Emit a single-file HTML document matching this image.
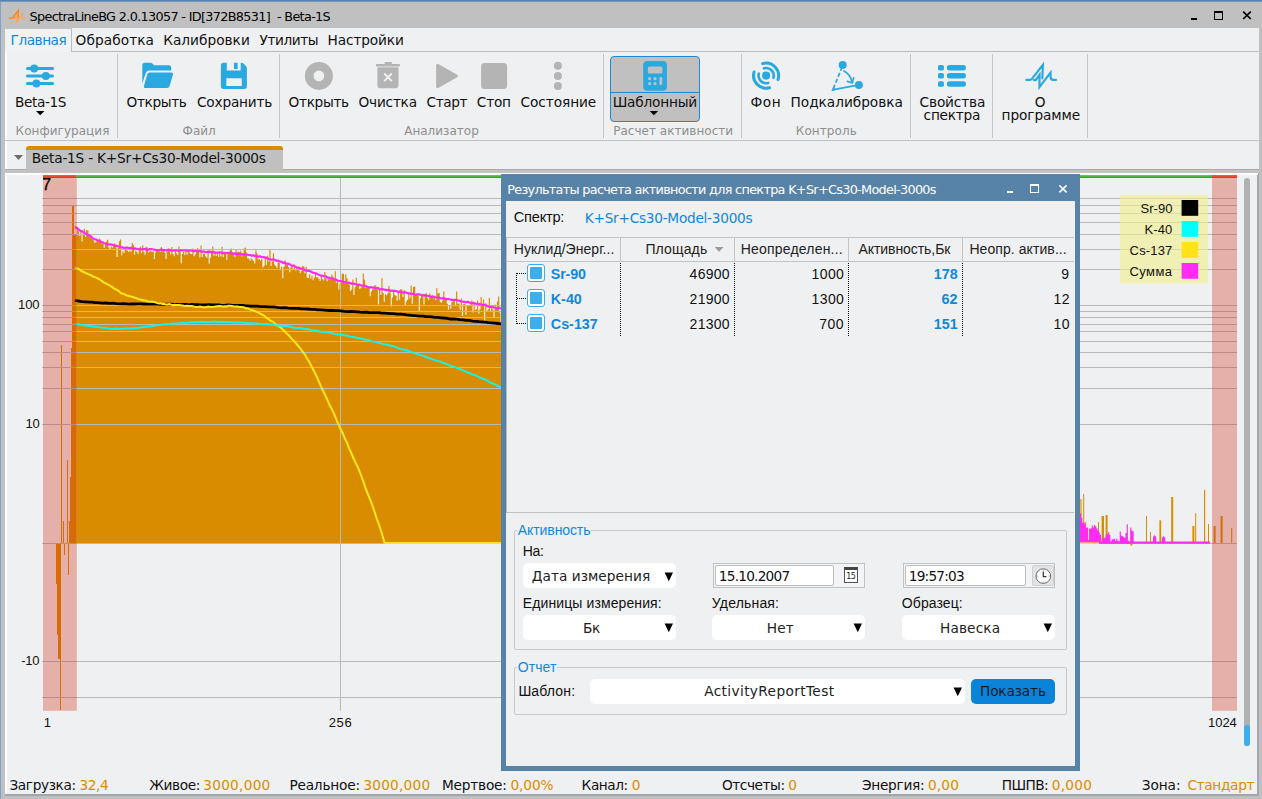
<!DOCTYPE html>
<html lang="ru"><head><meta charset="utf-8"><title>SpectraLineBG</title>
<style>
html,body{margin:0;padding:0}
body{width:1262px;height:799px;overflow:hidden;background:#c0c0c0;position:relative}
.b{position:absolute;display:block}
.t{position:absolute;line-height:20px;white-space:nowrap}
.dj{font-family:"DejaVu Sans",sans-serif}
.lb{font-family:"Liberation Sans",sans-serif}
</style></head>
<body>
<div class="b" style="left:0px;top:0px;width:1262px;height:2px;background:linear-gradient(#4a78a4,#7da1c4)"></div>
<div class="b" style="left:0px;top:2px;width:1px;height:797px;background:#7fa2c6"></div>
<div class="b" style="left:5px;top:28px;width:1254px;height:767px;background:#eff0f1"></div>
<div class="b" style="left:5px;top:52px;width:2px;height:743px;background:#fcfcfc"></div>
<div class="b" style="left:1257px;top:173px;width:2px;height:622px;background:#a3a7ac"></div>
<div class="b" style="left:5px;top:794px;width:1254px;height:1.5px;background:#a3a7ac"></div>
<span id="t1" class="t dj" style="left:29.6px;top:7.3px;font-size:12.8px;color:#000;letter-spacing:-0.664px;white-space:pre;">SpectraLineBG 2.0.13057 - ID[372B8531]&nbsp; - Beta-1S</span>
<div class="b" style="left:1191px;top:18px;width:6px;height:2px;background:#000"></div>
<div class="b" style="left:1214px;top:11px;width:9px;height:9px;border:1.5px solid #000;border-top-width:2.6px;box-sizing:border-box"></div>
<svg class="b" style="left:1242px;top:10px" width="10" height="10" viewBox="0 0 10 10"><path d="M1.2,1.6L8.8,9M8.8,1.6L1.2,9" stroke="#000" stroke-width="1.7" fill="none"/></svg>
<div class="b" style="left:5px;top:51px;width:1254px;height:1px;background:#bcbcbc"></div>
<div class="b" style="left:5px;top:28px;width:66px;height:24px;background:#f1f2f3;border-right:1px solid #bcbcbc;border-top:1px solid #c0c0c0;box-sizing:content-box;height:23px"></div>
<span id="t2" class="t dj" style="left:10.6px;top:29.7px;font-size:13.7px;color:#1287db;letter-spacing:-0.504px;">Главная</span>
<span id="t3" class="t dj" style="left:75.6px;top:29.7px;font-size:13.7px;color:#111;letter-spacing:0.072px;">Обработка</span>
<span id="t4" class="t dj" style="left:163.2px;top:29.7px;font-size:13.7px;color:#111;letter-spacing:0.012px;">Калибровки</span>
<span id="t5" class="t dj" style="left:259.6px;top:29.7px;font-size:13.7px;color:#111;letter-spacing:-0.434px;">Утилиты</span>
<span id="t6" class="t dj" style="left:327.6px;top:29.7px;font-size:13.7px;color:#111;letter-spacing:-0.123px;">Настройки</span>
<div class="b" style="left:5px;top:140px;width:1254px;height:1px;background:#c2c2c2"></div>
<div class="b" style="left:117px;top:54px;width:1px;height:84px;background:#c6c6c6"></div>
<div class="b" style="left:279px;top:54px;width:1px;height:84px;background:#c6c6c6"></div>
<div class="b" style="left:603px;top:54px;width:1px;height:84px;background:#c6c6c6"></div>
<div class="b" style="left:741px;top:54px;width:1px;height:84px;background:#c6c6c6"></div>
<div class="b" style="left:910px;top:54px;width:1px;height:84px;background:#c6c6c6"></div>
<div class="b" style="left:992px;top:54px;width:1px;height:84px;background:#c6c6c6"></div>
<div class="b" style="left:1087px;top:54px;width:1px;height:84px;background:#c6c6c6"></div>
<span id="t7" class="t dj" style="left:15.6px;top:120.6px;font-size:12px;color:#8e8e8e;letter-spacing:0.039px;">Конфигурация</span>
<span id="t8" class="t dj" style="left:182.6px;top:120.6px;font-size:12px;color:#8e8e8e;letter-spacing:0.009px;">Файл</span>
<span id="t9" class="t dj" style="left:404.2px;top:120.6px;font-size:12px;color:#8e8e8e;letter-spacing:0.004px;">Анализатор</span>
<span id="t10" class="t dj" style="left:613.2px;top:120.6px;font-size:12px;color:#8e8e8e;letter-spacing:0.029px;">Расчет активности</span>
<span id="t11" class="t dj" style="left:795.8px;top:120.6px;font-size:12px;color:#8e8e8e;letter-spacing:0.074px;">Контроль</span>
<div class="b" style="left:610px;top:56px;width:90px;height:66px;background:#c0c0c0;border:1px solid #1e8ad6;border-radius:4px;box-sizing:border-box"></div>
<div class="b" style="left:611px;top:92px;width:88px;height:1px;background:#1e8ad6"></div>
<span id="t12" class="t dj" style="left:14.9px;top:91.9px;font-size:13.7px;color:#111;letter-spacing:-0.387px;">Beta-1S</span>
<span id="t13" class="t dj" style="left:126.6px;top:91.9px;font-size:13.7px;color:#111;letter-spacing:-0.395px;">Открыть</span>
<span id="t14" class="t dj" style="left:197.0px;top:91.9px;font-size:13.7px;color:#111;letter-spacing:-0.211px;">Сохранить</span>
<span id="t15" class="t dj" style="left:288.6px;top:91.9px;font-size:13.7px;color:#111;letter-spacing:-0.337px;">Открыть</span>
<span id="t16" class="t dj" style="left:358.6px;top:91.9px;font-size:13.7px;color:#111;letter-spacing:-0.246px;">Очистка</span>
<span id="t17" class="t dj" style="left:426.6px;top:91.9px;font-size:13.7px;color:#111;letter-spacing:-0.397px;">Старт</span>
<span id="t18" class="t dj" style="left:476.8px;top:91.9px;font-size:13.7px;color:#111;letter-spacing:-0.215px;">Стоп</span>
<span id="t19" class="t dj" style="left:520.6px;top:91.9px;font-size:13.7px;color:#111;letter-spacing:-0.079px;">Состояние</span>
<span id="t20" class="t dj" style="left:612.7px;top:91.9px;font-size:13.7px;color:#111;letter-spacing:-0.211px;">Шаблонный</span>
<span id="t21" class="t dj" style="left:750.6px;top:91.9px;font-size:13.7px;color:#111;letter-spacing:0.496px;">Фон</span>
<span id="t22" class="t dj" style="left:790.6px;top:91.9px;font-size:13.7px;color:#111;letter-spacing:-0.035px;">Подкалибровка</span>
<span id="t23" class="t dj" style="left:919.6px;top:91.9px;font-size:13.7px;color:#111;letter-spacing:-0.157px;">Свойства</span>
<span id="t24" class="t dj" style="left:923.6px;top:104.9px;font-size:13.7px;color:#111;letter-spacing:-0.231px;">спектра</span>
<span id="t25" class="t dj" style="left:1034.8px;top:91.9px;font-size:13.7px;color:#111;letter-spacing:-0.184px;">О</span>
<span id="t26" class="t dj" style="left:1001.6px;top:104.9px;font-size:13.7px;color:#111;letter-spacing:-0.084px;">программе</span>
<svg class="b" style="left:8.5px;top:7.5px" width="17" height="16.5" viewBox="1025 61 32.5 30"><g fill="none" stroke-width="2.7" stroke-linejoin="miter" stroke-linecap="round" stroke-miterlimit="10"><path stroke="#ff8412" d="M1026.4,79.9H1029.8Q1031.1,79.9 1031.9,78.9L1042.9,64.9L1042.3,78.4"/><path stroke="#ffa454" d="M1033.9,80.1H1035.6L1039.5,74.7L1039.5,87.1L1050.5,72.6L1050.6,77.1Q1050.6,79.9 1053.2,79.9H1056"/></g></svg>
<svg class="b" style="left:0;top:0" width="1262" height="150" viewBox="0 0 1262 150"><g stroke="#2aa8e0" stroke-width="3" stroke-linecap="round"><path d="M27.5,68.4H52.5M27.5,76H52.5M27.5,83.5H52.5"/></g><g fill="#2aa8e0"><circle cx="34.2" cy="68.4" r="4"/><circle cx="45.8" cy="76" r="4"/><circle cx="36.4" cy="83.5" r="4"/></g><path d="M36,111h8.4l-4.2,4.2z" fill="#000"/><path d="M649.7,111h8.4l-4.2,4.2z" fill="#000"/><path fill="#2aa8e0" d="M142.3,65.2Q142.3,62.7 144.8,62.7H150.5Q151.6,62.7 152.4,63.5L153.6,64.7Q154.2,65.2 155,65.2H168.7Q171.2,65.2 171.2,67.7V70.6H149.2Q146.6,70.6 145.8,73L142.3,83.5Z"/><path fill="#2aa8e0" d="M149.6,72.4H171.2Q173.6,72.4 172.9,74.7L169.6,86.1Q169,88 167,88H145.6Q143.2,88 144,85.7L147.3,74.2Q147.8,72.4 149.6,72.4Z"/><path fill="#2aa8e0" fill-rule="evenodd" d="M223.6,62.7H241.5Q242.6,62.7 243.4,63.5L246.1,66.2Q246.9,67 246.9,68.1V86.3Q246.9,89 244.2,89H223.6Q220.9,89 220.9,86.3V65.4Q220.9,62.7 223.6,62.7ZM226.8,62.7V70.5H240.7V62.7H237.6V69H234V62.7ZM226.3,78.2H241.8V85.9H226.3Z"/><path fill="#b4b4b4" fill-rule="evenodd" d="M304.9,75.9a14,14 0 1,0 28,0a14,14 0 1,0 -28,0ZM313.5,75.9a5.4,5.4 0 1,0 10.8,0a5.4,5.4 0 1,0 -10.8,0Z"/><path fill="#b4b4b4" d="M385.4,62h5.6q.8,0 .8,.8V64H399q1,0 1,1v.4q0,1 -1,1H376.9q-1,0 -1,-1V65q0,-1 1,-1h7.7V62.8q0,-.8 .8,-.8Z"/><path fill="#b4b4b4" d="M377.4,67.2H398.5V85.2Q398.5,88.2 395.5,88.2H380.4Q377.4,88.2 377.4,85.2Z"/><path stroke="#eff0f1" stroke-width="2" fill="none" d="M384.2,73.5L391.8,81.1M391.8,73.5L384.2,81.1"/><path fill="#b4b4b4" stroke="#b4b4b4" stroke-width="3" stroke-linejoin="round" d="M437.6,65.2L456.4,76L437.6,86.8Z"/><rect x="481.1" y="63.1" width="26" height="26" rx="3.6" fill="#b4b4b4"/><g fill="#b4b4b4"><circle cx="557.9" cy="65.7" r="4"/><circle cx="557.9" cy="76" r="4"/><circle cx="557.9" cy="86.1" r="4"/></g><rect x="643.2" y="61" width="23.7" height="29.7" rx="4" fill="#2aa8e0"/><rect x="647.8" y="66.4" width="14.6" height="7.1" rx="1.6" fill="#c0c0c0"/><g fill="#c0c0c0"><circle cx="649.6" cy="78.7" r="1.6"/><circle cx="655" cy="78.7" r="1.6"/><circle cx="649.6" cy="83.7" r="1.6"/><circle cx="655" cy="83.7" r="1.6"/><rect x="659.4" y="77" width="2.9" height="8.2" rx="1.4"/></g><circle cx="766.1" cy="75.6" r="4.1" fill="#2aa8e0"/><g fill="none" stroke="#2aa8e0" stroke-width="3" stroke-linecap="round"><path d="M762.6,63.6A12.6,12.6 0 0 1 778,79.6"/><path d="M769.6,87.7A12.6,12.6 0 0 1 754.1,72"/></g><g fill="none" stroke="#2aa8e0" stroke-width="2.6" stroke-linecap="round"><path d="M764,68.3A7.6,7.6 0 0 1 773.4,77.8"/><path d="M768.2,82.9A7.6,7.6 0 0 1 758.8,73.6"/></g><g fill="#2aa8e0"><circle cx="842.7" cy="65.1" r="4"/><circle cx="858.9" cy="84.9" r="4"/></g><g fill="none" stroke="#2aa8e0" stroke-width="1.7"><path d="M842.2,67L832.9,89.6" stroke-dasharray="4.2,2.2"/><path d="M832.2,89.8L858.9,84.9"/><path d="M844,71Q850,74 852,82M847.4,81.4L852.2,83L853.7,77.8" stroke-linecap="round"/></g><path fill="#2aa8e0" d="M831.3,91L833.5,86.6L835.6,90.1Z"/><rect x="938" y="65" width="5.9" height="5.6" rx="1.6" fill="#2aa8e0"/><rect x="946.8" y="65.1" width="19.2" height="5.4" rx="2.7" fill="#2aa8e0"/><rect x="938" y="73" width="5.9" height="5.6" rx="1.6" fill="#2aa8e0"/><rect x="946.8" y="73.1" width="19.2" height="5.4" rx="2.7" fill="#2aa8e0"/><rect x="938" y="81.2" width="5.9" height="5.6" rx="1.6" fill="#2aa8e0"/><rect x="946.8" y="81.3" width="19.2" height="5.4" rx="2.7" fill="#2aa8e0"/><g fill="none" stroke="#2aa8e0" stroke-width="2.2" stroke-linecap="round" stroke-linejoin="miter" stroke-miterlimit="10"><path d="M1026.4,79.9H1029.8Q1031.1,79.9 1031.9,78.9L1042.9,64.9L1042.3,78.4"/><path d="M1033.9,80.1H1035.6L1039.5,74.7L1039.5,87.1L1050.5,72.6L1050.6,77.1Q1050.6,79.9 1053.2,79.9H1056"/></g></svg>
<div class="b" style="left:5px;top:169px;width:1254px;height:1px;background:#a9a9a9"></div>
<div class="b" style="left:5px;top:170px;width:1254px;height:3px;background:#c3c3c3"></div>
<div class="b" style="left:26px;top:146px;width:257px;height:26px;background:#c0c0c0;border-top:4px solid #d98c00;border-radius:3px 3px 0 0;box-sizing:border-box"></div>
<svg class="b" style="left:13px;top:154px" width="12" height="8" viewBox="0 0 12 8"><path d="M1,1h9l-4.5,5z" fill="#6e6e6e"/></svg>
<span id="t27" class="t dj" style="left:31.7px;top:147.7px;font-size:13.7px;color:#111;letter-spacing:-0.217px;">Beta-1S - K+Sr+Cs30-Model-3000s</span>
<div class="b" style="left:5px;top:173px;width:1253px;height:2px;background:#fff"></div>
<svg class="b" style="left:0;top:170px" width="1262" height="545" viewBox="0 170 1262 545"><path d="M76.8,543V228.3h1.167V231.2h1.167V235.7h1.167V230.7h1.167V241.5h1.167V233.5h1.167V228.7h1.167V236.7h1.167V229.9h1.167V230.4h1.167V237.1h1.167V236.8h1.167V238.5h1.167V239.4h1.167V240.6h1.167V243.1h1.167V241.9h1.167V240.4h1.167V239.9h1.167V238.8h1.167V239.7h1.167V243.5h1.167V243.3h1.167V247.7h1.167V243.5h1.167V241.6h1.167V239.8h1.167V247.5h1.167V249.8h1.167V246.6h1.167V247.8h1.167V244.1h1.167V243.3h1.167V245.0h1.167V257.0h1.167V248.1h1.167V241.3h1.167V239.4h1.167V255.5h1.167V251.3h1.167V253.0h1.167V249.8h1.167V250.2h1.167V250.5h1.167V251.9h1.167V250.7h1.167V251.8h1.167V243.1h1.167V244.8h1.167V254.7h1.167V250.5h1.167V251.7h1.167V253.9h1.167V248.3h1.167V246.8h1.167V253.0h1.167V245.3h1.167V252.0h1.167V254.8h1.167V246.7h1.167V247.5h1.167V252.3h1.167V251.4h1.167V250.8h1.167V252.0h1.167V251.3h1.167V259.1h1.167V252.4h1.167V249.0h1.167V249.3h1.167V249.4h1.167V251.9h1.167V246.9h1.167V251.5h1.167V249.3h1.167V253.0h1.167V259.1h1.167V252.1h1.167V250.2h1.167V250.8h1.167V254.4h1.167V247.1h1.167V254.0h1.167V256.2h1.167V250.0h1.167V253.3h1.167V255.0h1.167V246.4h1.167V251.9h1.167V263.3h1.167V254.1h1.167V251.9h1.167V255.1h1.167V250.5h1.167V254.7h1.167V250.7h1.167V252.4h1.167V253.9h1.167V253.9h1.167V248.5h1.167V256.2h1.167V254.5h1.167V252.0h1.167V248.1h1.167V249.0h1.167V257.5h1.167V245.4h1.167V257.1h1.167V253.7h1.167V253.8h1.167V256.4h1.167V257.7h1.167V250.1h1.167V263.4h1.167V257.7h1.167V251.9h1.167V246.5h1.167V255.8h1.167V253.0h1.167V256.0h1.167V253.0h1.167V256.9h1.167V251.0h1.167V256.5h1.167V246.7h1.167V257.3h1.167V253.0h1.167V253.7h1.167V260.1h1.167V254.1h1.167V253.4h1.167V249.7h1.167V248.5h1.167V252.2h1.167V254.4h1.167V257.3h1.167V249.1h1.167V252.4h1.167V251.6h1.167V252.2h1.167V250.8h1.167V256.4h1.167V252.9h1.167V248.4h1.167V247.5h1.167V252.4h1.167V258.4h1.167V258.4h1.167V260.7h1.167V258.4h1.167V259.4h1.167V261.0h1.167V263.5h1.167V250.4h1.167V253.5h1.167V259.5h1.167V259.3h1.167V260.7h1.167V258.8h1.167V267.5h1.167V265.7h1.167V257.1h1.167V265.0h1.167V255.8h1.167V261.5h1.167V249.9h1.167V266.0h1.167V261.6h1.167V253.2h1.167V264.5h1.167V265.9h1.167V268.1h1.167V262.7h1.167V262.7h1.167V270.3h1.167V266.6h1.167V278.2h1.167V267.1h1.167V260.4h1.167V265.1h1.167V264.3h1.167V266.9h1.167V272.2h1.167V267.2h1.167V264.9h1.167V269.7h1.167V264.5h1.167V270.4h1.167V267.8h1.167V268.9h1.167V270.3h1.167V273.3h1.167V271.2h1.167V265.9h1.167V266.4h1.167V273.6h1.167V266.7h1.167V277.8h1.167V278.1h1.167V274.3h1.167V278.7h1.167V275.8h1.167V280.2h1.167V277.7h1.167V273.4h1.167V277.5h1.167V277.3h1.167V279.1h1.167V280.9h1.167V275.0h1.167V279.0h1.167V280.5h1.167V272.0h1.167V278.3h1.167V281.2h1.167V278.3h1.167V279.4h1.167V279.1h1.167V274.5h1.167V276.8h1.167V277.9h1.167V271.2h1.167V283.1h1.167V280.6h1.167V289.4h1.167V283.8h1.167V280.9h1.167V273.8h1.167V273.7h1.167V282.4h1.167V274.5h1.167V278.3h1.167V283.6h1.167V284.8h1.167V290.9h1.167V289.6h1.167V279.5h1.167V295.1h1.167V287.2h1.167V277.7h1.167V284.4h1.167V284.1h1.167V289.1h1.167V287.7h1.167V285.5h1.167V273.6h1.167V279.6h1.167V287.9h1.167V286.0h1.167V285.9h1.167V287.4h1.167V296.2h1.167V291.5h1.167V289.6h1.167V286.6h1.167V285.0h1.167V286.5h1.167V289.5h1.167V304.4h1.167V287.9h1.167V295.1h1.167V278.2h1.167V293.0h1.167V301.7h1.167V294.2h1.167V295.3h1.167V293.4h1.167V285.7h1.167V292.5h1.167V306.6h1.167V297.4h1.167V291.9h1.167V294.9h1.167V295.7h1.167V300.7h1.167V292.6h1.167V299.8h1.167V289.3h1.167V289.6h1.167V296.9h1.167V290.0h1.167V305.6h1.167V301.5h1.167V299.7h1.167V294.1h1.167V298.2h1.167V285.5h1.167V303.7h1.167V287.0h1.167V286.6h1.167V294.8h1.167V293.6h1.167V295.5h1.167V310.8h1.167V298.2h1.167V294.7h1.167V293.6h1.167V304.4h1.167V294.0h1.167V293.0h1.167V298.3h1.167V299.7h1.167V293.4h1.167V297.4h1.167V294.7h1.167V298.5h1.167V296.6h1.167V299.9h1.167V288.2h1.167V293.6h1.167V292.9h1.167V302.0h1.167V302.8h1.167V300.6h1.167V291.6h1.167V299.1h1.167V298.9h1.167V303.7h1.167V309.8h1.167V306.0h1.167V308.4h1.167V302.0h1.167V300.4h1.167V300.6h1.167V305.7h1.167V291.5h1.167V303.6h1.167V303.4h1.167V309.7h1.167V298.6h1.167V316.1h1.167V304.0h1.167V303.7h1.167V314.8h1.167V305.6h1.167V306.0h1.167V304.7h1.167V304.7h1.167V300.6h1.167V312.4h1.167V302.0h1.167V310.1h1.167V309.2h1.167V300.4h1.167V313.4h1.167V309.3h1.167V296.9h1.167V305.7h1.167V299.4h1.167V321.3h1.167V303.2h1.167V311.6h1.167V309.5h1.167V298.0h1.167V312.1h1.167V306.5h1.167V309.4h1.167V317.5h1.167V304.4h1.167V308.4h1.167V301.4h1.167V296.5h1.167V312.6h1.167V324.4h1.167V314.9h1.167V311.8h1.167V307.6h1.167V293.9h1.167V315.7h1.167V325.7h1.167V307.7h1.167V305.9h1.167V311.3h1.167V311.7h1.167V314.4h1.167V310.9h1.167V305.0h1.167V320.8h1.167V318.8h1.167V314.6h1.167V314.7h1.167V327.7h1.167V303.7h1.167V328.5h1.167V315.7h1.167V314.2h1.167V313.7h1.167V301.1h1.167V322.5h1.167V312.3h1.167V318.6h1.167V319.5h1.167V322.7h1.167V324.5h1.167V316.3h1.167V322.8h1.167V312.4h1.167V319.3h1.167V320.0h1.167V314.9h1.167V321.6h1.167V307.3h1.167V314.7h1.167V322.9h1.167V321.1h1.167V333.1h1.167V325.9h1.167V320.0h1.167V332.6h1.167V306.0h1.167V325.1h1.167V323.4h1.167V320.0h1.167V326.2h1.167V319.6h1.167V307.5h1.167V323.2h1.167V315.9h1.167V320.4h1.167V316.6h1.167V328.9h1.167V332.5h1.167V305.3h1.167V334.3h1.167V325.5h1.167V313.3h1.167V310.4h1.167V324.6h1.167V328.3h1.167V324.5h1.167V332.1h1.167V322.1h1.167V328.7h1.167V318.6h1.167V327.3h1.167V323.4h1.167V326.0h1.167V331.3h1.167V324.9h1.167V334.6h1.167V331.7h1.167V326.3h1.167V324.4h1.167V330.6h1.167V329.5h1.167V328.1h1.167V325.1h1.167V325.0h1.167V322.8h1.167V330.8h1.167V324.6h1.167V336.6h1.167V343.7h1.167V311.0h1.167V330.5h1.167V324.5h1.167V317.9h1.167V335.7h1.167V338.4h1.167V331.2h1.167V320.6h1.167V318.6h1.167V325.1h1.167V337.3h1.167V315.3h1.167V329.5h1.167V338.3h1.167V314.5h1.167V347.7h1.167V347.4h1.167V339.4h1.167V330.0h1.167V335.4h1.167V329.9h1.167V322.3h1.167V342.3h1.167V336.0h1.167V342.1h1.167V339.0h1.167V339.2h1.167V344.8h1.167V344.2h1.167V338.1h1.167V333.2h1.167V332.1h1.167V332.3h1.167V327.3h1.167V342.4h1.167V348.1h1.167V339.5h1.167V339.4h1.167V325.3h1.167V335.2h1.167V339.7h1.167V346.3h1.167V352.6h1.167V337.8h1.167V337.7h1.167V337.9h1.167V340.5h1.167V345.0h1.167V340.0h1.167V339.9h1.167V327.5h1.167V322.4h1.167V343.4h1.167V355.3h1.167V325.1h1.167V343.4h1.167V338.8h1.167V345.6h1.167V340.0h1.167V346.0h1.167V350.8h1.167V350.0h1.167V346.5h1.167V338.2h1.167V330.2h1.167V353.7h1.167V353.1h1.167V354.0h1.167V339.5h1.167V362.5h1.167V362.8h1.167V349.8h1.167V342.0h1.167V339.4h1.167V359.8h1.167V349.0h1.167V346.7h1.167V334.1h1.167V331.3h1.167V352.8h1.167V351.1h1.167V344.1h1.167V345.1h1.167V355.7h1.167V364.8h1.167V360.2h1.167V352.5h1.167V354.6h1.167V364.4h1.167V346.3h1.167V346.7h1.167V354.1h1.167V359.3h1.167V365.2h1.167V343.7h1.167V368.0h1.167V356.4h1.167V349.9h1.167V348.5h1.167V359.8h1.167V372.0h1.167V368.7h1.167V361.1h1.167V369.2h1.167V359.0h1.167V362.3h1.167V370.7h1.167V361.3h1.167V354.1h1.167V374.9h1.167V365.9h1.167V375.6h1.167V361.4h1.167V360.5h1.167V351.1h1.167V362.0h1.167V364.7h1.167V356.2h1.167V345.5h1.167V353.5h1.167V360.0h1.167V362.5h1.167V377.9h1.167V365.7h1.167V363.7h1.167V364.3h1.167V342.1h1.167V372.3h1.167V360.3h1.167V356.3h1.167V355.9h1.167V348.7h1.167V371.3h1.167V353.3h1.167V374.6h1.167V372.1h1.167V382.8h1.167V370.9h1.167V371.7h1.167V376.6h1.167V383.8h1.167V365.8h1.167V357.7h1.167V384.3h1.167V377.6h1.167V387.6h1.167V353.0h1.167V388.4h1.167V360.7h1.167V376.1h1.167V376.1h1.167V361.6h1.167V360.3h1.167V379.4h1.167V378.7h1.167V386.1h1.167V386.9h1.167V373.5h1.167V392.6h1.167V390.3h1.167V375.3h1.167V389.7h1.167V381.2h1.167V369.5h1.167V393.9h1.167V383.3h1.167V376.8h1.167V388.5h1.167V381.4h1.167V394.8h1.167V382.5h1.167V387.8h1.167V395.1h1.167V381.5h1.167V399.0h1.167V380.0h1.167V371.7h1.167V400.2h1.167V395.3h1.167V378.2h1.167V378.3h1.167V390.5h1.167V393.5h1.167V390.0h1.167V396.8h1.167V370.3h1.167V403.9h1.167V369.4h1.167V385.6h1.167V383.7h1.167V399.2h1.167V380.3h1.167V374.1h1.167V394.0h1.167V376.0h1.167V399.3h1.167V386.9h1.167V386.4h1.167V370.7h1.167V394.4h1.167V405.9h1.167V391.2h1.167V402.8h1.167V411.2h1.167V411.6h1.167V412.1h1.167V395.0h1.167V403.9h1.167V413.4h1.167V396.0h1.167V401.3h1.167V394.2h1.167V385.4h1.167V411.8h1.167V415.0h1.167V413.3h1.167V394.1h1.167V393.8h1.167V407.4h1.167V406.4h1.167V382.8h1.167V394.7h1.167V392.9h1.167V416.9h1.167V414.0h1.167V398.8h1.167V398.9h1.167V396.6h1.167V397.5h1.167V416.4h1.167V423.7h1.167V424.2h1.167V411.9h1.167V423.3h1.167V425.6h1.167V426.1h1.167V422.7h1.167V391.1h1.167V410.8h1.167V382.6h1.167V428.6h1.167V394.2h1.167V429.6h1.167V411.8h1.167V419.5h1.167V431.1h1.167V417.8h1.167V409.8h1.167V427.1h1.167V433.2h1.167V411.5h1.167V410.7h1.167V426.3h1.167V428.2h1.167V399.8h1.167V427.2h1.167V436.8h1.167V434.4h1.167V395.9h1.167V415.2h1.167V421.2h1.167V431.8h1.167V414.4h1.167V440.5h1.167V430.6h1.167V424.0h1.167V439.2h1.167V406.0h1.167V438.4h1.167V443.8h1.167V414.7h1.167V444.9h1.167V413.5h1.167V434.6h1.167V429.1h1.167V424.5h1.167V421.4h1.167V436.0h1.167V448.7h1.167V449.2h1.167V416.8h1.167V411.0h1.167V416.1h1.167V444.4h1.167V403.3h1.167V408.1h1.167V432.2h1.167V425.0h1.167V434.2h1.167V433.2h1.167V440.5h1.167V418.9h1.167V442.5h1.167V457.1h1.167V444.0h1.167V424.5h1.167V412.0h1.167V451.6h1.167V442.9h1.167V460.6h1.167V450.7h1.167V419.7h1.167V462.3h1.167V451.9h1.167V445.2h1.167V427.9h1.167V464.7h1.167V415.9h1.167V445.1h1.167V428.4h1.167V464.1h1.167V462.4h1.167V434.6h1.167V398.9h1.167V452.1h1.167V446.1h1.167V470.9h1.167V471.5h1.167V429.0h1.167V472.8h1.167V440.4h1.167V473.0h1.167V460.1h1.167V439.1h1.167V428.4h1.167V438.5h1.167V441.3h1.167V456.5h1.167V449.5h1.167V465.2h1.167V480.3h1.167V473.6h1.167V416.1h1.167V482.4h1.167V431.2h1.167V460.8h1.167V484.6h1.167V485.3h1.167V427.6h1.167V483.3h1.167V475.3h1.167V488.3h1.167V461.1h1.167V427.1h1.167V444.4h1.167V466.6h1.167V482.8h1.167V486.1h1.167V481.9h1.167V494.4h1.167V495.2h1.167V484.0h1.167V484.9h1.167V485.3h1.167V467.7h1.167V473.2h1.167V438.6h1.167V459.4h1.167V458.9h1.167V485.5h1.167V503.1h1.167V503.9h1.167V492.7h1.167V475.7h1.167V506.2h1.167V483.4h1.167V493.4h1.167V459.9h1.167V507.9h1.167V472.5h1.167V511.2h1.167V465.0h1.167V512.9h1.167V513.8h1.167V491.3h1.167V487.3h1.167V458.0h1.167V517.3h1.167V496.6h1.167V458.5h1.167V520.0h1.167V464.6h1.167V476.0h1.167V522.7h1.167V508.6h1.167V524.5h1.167V464.0h1.167V526.1h1.167V466.9h1.167V527.7h1.167V478.1h1.167V508.2h1.167V523.0h1.167V527.6h1.167V531.2h1.167V488.2h1.167V494.6h1.167V516.6h1.167V533.5h1.167V534.1h1.167V534.6h1.167V474.8h1.167V495.8h1.167V489.2h1.167V526.2h1.167V537.2h1.167V537.7h1.167V499.0h1.167V538.0h1.167V543Z" fill="#d98c00"/><rect x="72" y="205.7" width="2" height="337.3" fill="#d98c00"/><rect x="74" y="235" width="2.8" height="308" fill="#d98c00"/><rect x="71" y="348" width="1" height="195" fill="#d98c00"/><rect x="70" y="477" width="1" height="66" fill="#d98c00"/><rect x="61" y="345" width="1" height="198" fill="#d98c00"/><rect x="63" y="521" width="1" height="22" fill="#d98c00"/><rect x="67" y="460" width="1" height="83" fill="#d98c00"/><rect x="69" y="521" width="1" height="22" fill="#d98c00"/><rect x="56" y="543" width="1" height="41" fill="#d98c00"/><rect x="57" y="543" width="1" height="91.5" fill="#d98c00"/><rect x="58" y="543" width="2" height="116" fill="#d98c00"/><rect x="60" y="543" width="1" height="167" fill="#d98c00"/><rect x="64" y="543" width="1" height="12" fill="#d98c00"/><rect x="68" y="543" width="1" height="32" fill="#d98c00"/><rect x="1083.2" y="494" width="1" height="49" fill="#d98c00"/><rect x="1085.2" y="522" width="1" height="21" fill="#d98c00"/><rect x="1089" y="528.6" width="1" height="14.4" fill="#d98c00"/><rect x="1098" y="522" width="1" height="21" fill="#d98c00"/><rect x="1101.6" y="516" width="2.4" height="27" fill="#d98c00"/><rect x="1105.6" y="515" width="2" height="28" fill="#d98c00"/><rect x="1146" y="516" width="1" height="27" fill="#d98c00"/><rect x="1150" y="532" width="1" height="11" fill="#d98c00"/><rect x="1159.4" y="520.3" width="1.8" height="22.7" fill="#d98c00"/><rect x="1171.2" y="497" width="2" height="46" fill="#d98c00"/><rect x="1192.4" y="526" width="2" height="17" fill="#d98c00"/><rect x="1195.2" y="513" width="1" height="30" fill="#d98c00"/><rect x="1204" y="490" width="1.2" height="53" fill="#d98c00"/><rect x="1208" y="524" width="1" height="19" fill="#d98c00"/><rect x="1213.6" y="526" width="2" height="17" fill="#d98c00"/><rect x="1220.6" y="516" width="2" height="27" fill="#d98c00"/><rect x="1231.2" y="528" width="1" height="15" fill="#d98c00"/><rect x="1130.4" y="543" width="2" height="2.6" fill="#d98c00"/><path d="M42,198.5H1237M42,205.5H1237M42,213.5H1237M42,222.5H1237M42,234.5H1237M42,249.5H1237M42,269.5H1237M42,305.5H1237M42,311.5H1237M42,317.5H1237M42,324.5H1237M42,331.5H1237M42,341.5H1237M42,352.5H1237M42,367.5H1237M42,388.5H1237M42,424.5H1237M42,543.5H1237M42,661.5H1237M42,697.5H1237" stroke="#b9b9b9" stroke-width="1" fill="none"/><path d="M340.5,178V711M638.5,178V711M936.5,178V711" stroke="#b9b9b9" stroke-width="1" fill="none"/><path d="M74.8,300.6L76.6,300.7L79.0,301.1L82.1,301.6L85.7,301.9L90.0,302.2L92.3,302.1L94.7,302.6L97.3,302.7L99.9,302.9L102.8,303.2L105.8,303.0L109.1,303.4L112.8,303.2L116.7,303.7L121.0,303.9L123.4,303.6L126.0,303.8L128.7,304.1L131.5,304.0L134.4,304.0L137.4,303.9L140.5,303.8L143.7,304.0L146.9,304.1L150.2,304.0L153.5,304.1L156.8,304.0L160.2,304.3L163.5,304.4L166.9,304.2L170.2,304.2L173.5,304.4L176.8,304.4L180.0,304.7L183.0,304.5L185.9,304.5L188.8,304.8L191.7,304.5L194.5,304.7L197.4,304.6L200.2,304.9L203.0,304.8L205.9,304.9L208.8,304.7L211.8,304.9L214.8,305.0L217.8,304.9L221.0,305.2L224.3,305.3L227.7,305.0L231.2,305.2L234.8,305.3L238.6,305.4L242.5,305.5L245.1,305.7L247.7,305.8L250.5,306.1L253.3,306.2L256.2,306.1L259.2,306.4L262.3,306.6L265.4,306.7L268.5,306.8L271.7,306.9L275.0,307.0L278.2,307.7L281.5,307.8L284.9,307.6L288.2,308.1L291.5,308.4L294.9,308.4L298.2,308.4L301.6,308.8L304.9,308.9L308.1,309.0L311.4,309.4L314.6,309.3L317.8,309.9L320.9,309.9L323.9,310.1L326.9,310.4L329.9,310.5L332.7,310.4L335.5,310.6L338.1,310.7L340.7,310.8L344.4,311.3L348.0,311.6L351.3,311.5L354.4,311.6L357.5,311.9L360.3,312.2L363.1,312.3L365.8,312.1L368.5,312.5L371.1,312.7L373.7,312.7L376.3,312.7L379.0,312.7L381.7,313.2L384.5,313.1L387.4,313.3L390.4,313.6L393.5,313.7L396.8,314.2L400.3,314.2L404.0,314.4L406.5,314.8L409.1,315.1L411.8,315.4L414.5,315.6L417.3,315.9L420.1,316.2L422.9,316.2L425.8,316.5L428.8,316.6L431.8,316.9L434.8,317.3L437.8,317.3L440.9,317.9L444.0,318.0L447.1,318.4L450.3,319.0L453.4,318.8L456.6,319.1L459.8,319.6L463.0,319.8L466.2,320.4L469.4,320.3L472.6,321.1L475.8,321.4L479.0,321.7L482.2,321.9L485.4,322.1L488.5,322.6L491.7,322.9L494.8,323.2L497.9,323.5L501.0,323.9L504.0,324.3L507.1,324.7L510.3,325.1L513.5,325.1L516.9,325.6L520.2,326.1L523.6,326.5L527.1,326.8L530.5,327.2L534.0,327.5L537.5,328.1L541.0,328.6L544.5,329.3L548.0,329.7L551.4,330.1L554.9,330.6L558.2,331.0L561.6,331.2L564.9,331.7L568.1,331.8L571.2,332.5L574.3,332.8L577.2,333.0L580.1,333.5L582.8,334.1L585.5,334.2L588.0,334.6L590.4,334.7L592.6,335.0L594.7,335.5L596.6,335.3L598.4,335.6L600.0,336.1" stroke="#000" stroke-width="2.8" fill="none" stroke-linejoin="round"/><path d="M74.8,267.7L76.3,268.2L78.4,268.9L80.9,270.7L83.5,272.0L86.0,273.0L88.1,274.2L90.3,274.9L92.5,276.2L94.7,277.1L96.9,277.9L99.0,279.2L101.3,280.5L103.5,282.5L105.7,283.3L107.8,284.5L110.0,285.7L112.2,287.1L114.4,288.7L116.7,289.9L118.9,291.1L121.0,293.2L123.1,293.8L125.1,294.6L127.0,295.5L129.0,295.9L131.0,296.5L133.0,297.0L135.0,297.8L137.0,298.3L139.1,299.3L141.4,299.7L143.5,300.5L145.7,300.4L147.9,301.5L150.3,301.7L152.6,301.6L155.0,302.2L156.9,302.9L158.6,303.6L160.3,303.3L162.1,303.9L164.2,303.9L166.7,304.6L169.7,304.1L171.2,304.6L172.9,305.2L174.7,304.7L176.6,304.9L178.6,304.9L180.7,305.2L182.8,305.5L185.0,306.1L187.2,305.8L189.4,306.1L191.6,306.1L193.8,306.6L196.0,307.0L198.0,306.9L200.1,306.5L202.0,307.1L204.2,307.4L206.4,307.0L208.6,306.5L210.8,307.1L213.0,307.1L215.2,306.5L217.3,306.2L219.4,306.1L221.4,306.3L223.4,306.6L225.2,306.3L226.9,306.5L228.5,305.7L230.0,305.8L233.3,306.3L235.7,306.4L237.5,306.4L239.2,307.0L241.0,307.0L243.5,307.3L246.0,308.2L248.3,308.5L250.6,309.8L252.8,310.3L254.9,311.2L257.0,312.1L259.0,312.8L261.6,314.4L264.1,315.6L266.7,318.2L268.7,319.2L270.8,321.0L272.9,321.6L275.0,323.6L277.0,325.2L278.9,326.3L280.9,327.7L283.0,329.7L284.9,331.4L286.9,333.9L288.9,335.3L291.0,338.1L293.0,339.9L295.0,342.2L297.0,344.5L299.0,346.8L301.0,349.4L303.0,352.1L305.0,354.8L307.0,358.5L309.0,361.4L311.0,365.4L313.0,369.3L315.0,373.3L317.0,377.2L319.1,382.1L321.1,386.7L323.0,390.5L325.3,395.3L327.6,400.4L329.8,405.6L332.0,409.6L334.3,414.4L336.5,419.8L338.7,424.8L340.7,429.3L343.0,433.8L345.0,438.9L347.0,442.7L349.2,448.6L351.4,453.4L353.6,458.5L355.6,462.9L357.6,466.7L359.6,471.5L361.7,477.0L363.8,482.6L366.0,489.4L368.3,495.0L370.7,500.9L373.0,507.1L375.1,513.6L377.1,519.6L379.0,524.7L382.2,534.4L384.6,542.9" stroke="#ffe81a" stroke-width="2" fill="none" stroke-linejoin="round"/><path d="M384.2,543H1100" stroke="#ffe81a" stroke-width="2" fill="none"/><path d="M74.8,323.9L77.0,324.0L80.1,324.8L83.8,325.2L87.7,325.8L91.5,326.3L95.0,326.8L98.1,327.2L101.1,327.5L104.0,327.7L106.9,328.1L109.9,328.8L113.0,328.7L116.1,328.6L119.0,329.1L122.1,328.7L125.3,328.6L129.1,328.6L133.4,328.2L135.9,328.1L138.6,327.8L141.5,327.3L144.5,327.1L147.6,326.4L150.8,326.2L154.1,325.8L157.3,325.1L160.5,324.9L163.7,324.3L166.8,324.2L169.7,324.1L173.1,323.6L176.3,323.4L179.4,323.2L182.5,322.6L185.6,322.9L188.7,322.5L191.8,322.0L195.1,322.3L198.5,321.9L202.0,321.7L204.8,322.1L207.8,321.9L210.8,322.0L213.9,321.6L217.0,322.1L220.1,321.7L223.3,321.9L226.5,322.0L229.8,321.9L233.0,322.4L236.2,322.2L239.4,322.4L242.5,322.8L245.6,322.8L248.6,323.2L251.5,323.2L254.4,323.5L257.3,323.5L260.2,323.9L263.2,324.1L266.2,323.9L269.3,324.6L272.5,324.6L275.8,325.2L279.3,325.6L283.0,326.1L285.6,326.0L288.4,326.5L291.3,327.1L294.3,327.7L297.3,328.0L300.4,328.0L303.6,328.8L306.8,329.0L310.1,329.8L313.3,330.4L316.5,330.5L319.8,331.5L323.0,331.9L326.1,332.1L329.2,332.6L332.2,333.3L335.1,334.0L338.0,334.4L340.7,334.6L344.2,335.2L347.7,335.8L351.0,336.9L354.2,337.1L357.4,338.0L360.4,338.4L363.5,339.3L366.4,339.8L369.4,340.3L372.3,341.4L375.2,341.8L378.1,342.6L381.0,343.4L384.0,344.3L387.2,344.5L390.3,345.6L393.4,346.3L396.5,347.4L399.6,348.6L402.6,349.4L405.7,349.9L408.7,351.0L411.7,352.3L414.8,353.2L417.8,354.1L420.9,355.1L424.0,356.0L427.1,357.5L430.3,358.3L433.4,359.7L436.6,360.6L439.8,361.4L443.0,362.7L446.2,363.8L449.3,365.4L452.5,366.4L455.6,367.3L458.7,368.6L461.7,369.9L464.7,371.2L467.8,372.5L470.7,373.6L473.6,374.8L476.3,375.7L479.0,377.2L481.7,378.3L484.5,379.3L487.4,380.9L490.4,382.7L493.7,383.7L497.2,385.6L501.0,387.8L503.6,388.9L506.5,390.5L509.7,392.3L513.0,393.9L516.4,395.9L520.0,397.9L523.6,400.1L527.3,402.1L530.9,403.6L534.6,405.9L538.2,408.0L541.6,410.0L545.0,411.8L548.1,413.5L551.1,415.1L553.7,416.5L556.2,417.8L558.3,419.2L560.0,420.2" stroke="#14f2ec" stroke-width="2" fill="none" stroke-linejoin="round"/><path d="M74.8,227.4L75.8,227.4L77.1,228.0L78.7,229.6L80.5,230.9L82.3,231.4L84.2,233.0L86.0,233.8L87.6,234.9L89.2,235.4L90.8,236.3L92.5,238.2L94.2,239.0L95.8,239.5L97.5,240.4L99.0,240.8L100.7,242.0L102.3,242.2L103.8,243.2L105.4,243.5L106.9,244.0L108.4,244.5L110.0,244.3L111.5,244.5L113.0,245.0L114.4,245.4L115.9,245.7L117.4,246.0L119.2,246.8L121.2,247.5L122.5,247.2L123.9,247.9L125.3,248.1L126.8,247.4L128.4,248.1L129.9,248.1L131.6,247.9L133.2,248.9L134.9,248.4L136.6,248.8L138.3,249.0L140.0,249.5L141.4,249.3L142.8,249.1L144.1,249.2L145.4,249.0L146.7,249.8L148.1,249.9L149.4,249.2L150.9,249.1L152.4,249.3L154.0,249.5L155.7,250.1L157.5,250.1L159.5,250.2L161.6,249.4L162.8,250.2L164.1,250.2L165.4,250.2L166.8,250.6L168.2,249.7L169.6,249.8L171.1,250.5L172.6,250.7L174.2,250.5L175.8,250.2L177.4,250.6L179.0,250.8L180.6,250.2L182.3,250.5L183.9,250.5L185.6,250.4L187.3,250.8L188.9,250.6L190.6,250.7L192.3,250.7L193.9,251.3L195.6,250.7L197.2,251.5L198.8,251.0L200.4,251.0L202.0,251.9L203.5,251.3L205.0,252.1L206.6,252.1L208.2,252.2L209.8,251.6L211.4,252.0L213.0,251.8L214.6,252.7L216.2,252.7L217.9,252.6L219.5,252.5L221.1,252.5L222.7,253.1L224.3,252.9L225.9,253.2L227.4,252.8L229.0,253.0L230.5,252.9L232.0,253.7L233.4,253.7L234.9,253.4L236.2,254.2L237.6,253.7L238.9,254.0L240.1,253.8L241.3,254.1L242.5,254.7L244.7,254.4L246.7,254.5L248.5,255.0L250.2,255.0L251.7,255.8L253.2,255.2L254.5,256.2L255.9,255.5L257.1,256.6L258.5,256.6L259.8,256.3L261.2,256.9L262.7,257.0L264.3,257.3L265.8,257.6L267.4,258.1L268.9,259.1L270.5,259.4L272.0,259.8L273.6,259.3L275.1,260.0L276.7,261.0L278.2,260.6L279.8,261.7L281.3,261.7L282.9,262.9L284.4,262.4L285.8,263.6L287.2,263.6L288.5,263.9L289.8,264.2L291.2,265.5L292.6,265.7L294.0,265.9L295.5,266.7L297.2,267.8L298.9,267.7L300.9,268.7L303.0,268.9L304.2,269.4L305.4,270.4L306.7,270.7L308.0,270.6L309.3,271.0L310.7,271.4L312.1,272.4L313.6,272.8L315.0,273.1L316.5,273.5L318.1,274.4L319.6,275.0L321.2,275.6L322.8,275.9L324.4,276.0L326.0,276.4L327.6,277.6L329.2,277.7L330.9,278.5L332.5,278.3L334.2,279.6L335.8,279.5L337.4,280.5L339.1,281.0L340.7,281.0L342.2,280.9L343.6,282.1L345.1,282.0L346.6,282.8L348.1,282.5L349.7,282.8L351.2,283.7L352.8,283.6L354.3,283.7L355.9,284.2L357.4,284.8L359.0,284.5L360.6,285.3L362.2,285.5L363.8,285.9L365.4,285.8L366.9,286.7L368.5,287.1L370.1,287.4L371.7,287.2L373.3,287.8L374.8,287.8L376.4,288.4L377.9,288.0L379.5,289.1L381.0,289.4L382.5,289.2L384.0,289.5L385.6,289.8L387.2,290.1L388.8,289.8L390.4,291.0L391.9,290.5L393.5,290.8L395.1,290.9L396.6,291.3L398.2,292.1L399.7,291.6L401.3,291.9L402.8,292.7L404.3,292.4L405.9,292.4L407.4,293.2L408.9,293.4L410.5,293.6L412.0,294.0L413.5,293.6L415.1,294.6L416.6,294.7L418.1,294.2L419.7,294.5L421.2,295.1L422.8,295.4L424.3,295.4L425.9,295.5L427.4,296.0L429.0,295.9L430.6,296.6L432.1,297.1L433.7,296.6L435.3,297.3L436.9,297.7L438.4,297.3L440.0,298.2L441.6,298.5L443.2,298.2L444.8,298.5L446.3,299.1L447.9,299.0L449.5,299.1L451.0,299.9L452.6,300.0L454.1,299.8L455.7,299.9L457.2,300.2L458.7,300.6L460.2,301.3L461.7,301.4L463.2,301.8L464.7,301.9L466.3,302.2L467.8,301.7L469.3,302.4L470.7,303.1L472.1,303.4L473.5,302.9L474.9,303.4L476.3,303.8L477.6,303.8L479.0,304.3L480.3,304.1L481.7,304.7L483.1,305.0L484.5,304.8L485.9,305.2L487.4,306.4L488.9,306.5L490.4,306.9L492.0,306.9L493.7,307.4L495.4,307.8L497.2,308.2L499.1,307.7L501.0,308.6L502.2,308.5L503.5,309.1L504.8,309.0L506.1,309.5L507.5,310.1L508.8,310.0L510.2,309.9L511.6,310.4L513.0,310.6L514.5,311.4L516.0,310.9L517.4,311.2L518.9,311.8L520.5,311.6L522.0,312.3L523.5,312.9L525.1,312.8L526.7,312.8L528.2,313.3L529.8,313.6L531.4,313.5L533.0,313.8L534.6,314.0L536.2,314.5L537.8,314.9L539.4,315.0L541.0,315.3L542.6,315.4L544.2,316.2L545.9,316.7L547.5,316.8L549.0,317.0L550.6,317.4L552.2,317.3L553.8,318.1L555.4,318.1L556.9,318.5L558.5,318.8L560.0,319.0L561.5,319.1L563.0,319.3L564.5,319.6L566.0,320.1L567.5,320.3L568.9,320.8L570.4,320.5L571.9,321.1L573.4,321.9L574.9,321.6L576.4,322.2L577.9,322.4L579.4,322.5L580.9,323.5L582.4,323.1L583.9,323.9L585.4,323.5L586.9,323.8L588.4,324.9L589.9,324.7L591.4,324.6L592.9,325.3L594.4,325.6L596.0,326.2L597.5,325.9L599.0,326.3L600.5,327.4L602.0,327.4L603.5,327.2L605.0,327.7L606.5,328.0L608.0,328.6L609.5,328.9L611.0,329.4L612.5,329.7L614.0,329.7L615.5,330.3L617.0,330.6L618.5,330.9L620.0,331.0L621.5,331.6L623.0,331.9L624.5,332.4L626.0,331.9L627.5,333.0L629.0,332.5L630.5,333.6L632.0,333.7L633.5,334.0L635.0,334.8L636.5,334.7L638.0,334.9L639.5,335.6L641.0,336.0L642.5,336.1L644.0,336.2L645.5,336.7L647.0,337.0L648.5,337.6L650.0,337.5L651.5,338.0L653.0,338.5L654.5,338.7L656.0,339.0L657.5,339.8L659.0,340.2L660.5,340.2L662.0,340.5L663.5,340.6L665.0,341.1L666.5,341.3L668.0,342.1L669.5,342.5L671.0,342.4L672.5,343.6L674.0,343.3L675.5,344.2L677.0,344.6L678.5,345.1L680.0,344.7L681.5,345.3L683.0,346.2L684.5,345.6L686.0,346.1L687.5,346.9L689.0,347.3L690.5,348.1L692.0,348.3L693.5,348.4L695.0,349.3L696.5,349.2L698.0,349.6L699.5,350.1L701.0,350.2L702.5,350.6L704.0,351.2L705.5,351.4L707.0,352.3L708.5,352.5L710.0,352.7L711.5,352.7L713.0,353.4L714.5,353.8L716.0,354.3L717.5,354.8L719.0,355.5L720.5,356.0L722.0,355.9L723.5,356.3L725.0,356.9L726.5,357.7L728.0,357.4L729.5,358.0L731.0,358.7L732.5,358.5L734.0,359.1L735.5,360.2L737.0,360.5L738.5,360.6L740.0,360.6L741.5,361.8L743.0,362.1L744.5,362.6L746.0,363.3L747.5,363.6L749.0,363.6L750.5,363.8L752.0,364.3L753.5,365.0L755.0,365.5L756.5,365.6L758.0,366.1L759.5,367.0L761.0,367.4L762.5,367.6L764.0,368.7L765.5,368.8L767.0,368.7L768.5,369.6L770.0,370.4L771.5,370.4L773.0,371.3L774.5,371.1L776.0,371.8L777.5,372.9L779.0,373.1L780.5,373.7L782.0,373.7L783.5,374.5L785.0,375.0L786.5,375.2L788.0,376.1L789.5,376.5L791.0,377.5L792.5,377.5L794.0,377.9L795.5,378.1L797.0,378.6L798.5,379.7L800.0,379.6L801.5,380.1L803.0,380.7L804.5,381.6L806.0,382.4L807.5,382.7L809.0,383.4L810.5,383.2L812.0,383.7L813.5,384.9L815.0,385.0L816.5,385.9L818.0,386.1L819.5,386.5L821.0,387.1L822.5,387.5L824.0,388.8L825.5,389.0L827.0,389.3L828.5,390.0L830.0,390.4L831.5,390.7L833.0,392.1L834.5,392.3L836.0,393.2L837.5,393.3L839.0,394.0L840.5,394.2L842.0,394.6L843.5,396.0L845.0,396.5L846.5,396.5L848.0,397.7L849.5,398.2L851.0,398.3L852.5,399.1L854.0,400.1L855.5,400.2L857.0,401.3L858.5,401.1L860.0,401.9L861.5,402.8L863.0,402.9L864.5,403.6L866.0,404.8L867.5,405.0L869.0,405.9L870.5,406.0L872.0,406.6L873.5,407.4L875.0,407.8L876.5,409.2L878.0,409.2L879.5,410.1L881.0,410.3L882.5,411.3L884.0,411.8L885.5,412.5L887.0,412.8L888.5,413.5L890.0,414.8L891.5,415.0L893.0,415.5L894.5,416.2L896.0,416.9L897.5,417.5L899.0,418.0L900.5,419.3L902.0,419.6L903.5,420.1L905.0,421.3L906.5,421.4L908.0,422.2L909.5,423.5L911.0,423.5L912.5,424.5L914.0,425.6L915.5,426.2L917.0,426.3L918.5,427.2L920.0,428.2L921.5,428.6L923.0,429.9L924.5,429.8L926.0,431.3L927.6,431.5L929.1,432.0L930.6,432.9L932.2,433.3L933.7,434.6L935.2,434.9L936.8,436.3L938.3,436.7L939.9,437.3L941.4,437.9L942.9,439.0L944.5,439.3L946.0,440.7L947.6,440.7L949.1,441.9L950.6,442.7L952.2,443.2L953.7,444.4L955.2,444.8L956.7,445.8L958.2,446.5L959.7,447.0L961.2,447.8L962.7,448.3L964.2,449.2L965.7,450.6L967.2,450.9L968.6,452.0L970.1,452.2L971.5,453.4L973.0,454.0L974.4,454.9L975.8,455.5L977.2,456.0L978.6,457.0L980.0,457.7L981.7,458.6L983.3,460.1L985.0,460.7L986.7,461.8L988.3,463.2L990.0,464.1L991.6,465.2L993.3,466.2L994.9,466.5L996.5,467.6L998.1,468.4L999.8,470.1L1001.4,471.1L1003.0,471.8L1004.5,472.9L1006.1,474.2L1007.6,475.2L1009.2,475.8L1010.7,477.4L1012.2,477.9L1013.7,479.1L1015.2,479.7L1016.6,480.6L1018.1,482.4L1019.5,483.1L1020.9,484.0L1022.3,484.3L1023.6,485.2L1024.9,486.2L1026.2,487.2L1027.5,488.1L1028.8,489.1L1030.0,489.5L1032.0,491.2L1033.9,492.8L1035.7,493.6L1037.4,495.6L1039.1,496.6L1040.8,497.9L1042.4,498.7L1043.9,500.0L1045.4,501.4L1046.9,502.2L1048.3,503.0L1049.7,504.9L1051.0,505.9L1052.4,506.4L1053.7,507.1L1055.0,508.9L1056.2,509.6L1057.5,509.9L1058.7,510.9L1060.0,511.6L1061.9,513.5L1063.8,514.0L1065.7,515.7L1067.5,516.5L1069.3,516.8L1071.0,518.2L1072.7,518.6L1074.2,519.7L1075.6,520.4L1077.0,520.4L1078.1,520.7L1079.1,522.0L1080.0,521.9" stroke="#ff2cf0" stroke-width="2.2" fill="none" stroke-linejoin="round"/><path d="M1080,543.6V513.5h1.167V517.9h1.167V522.8h1.167V522.8h1.167V524.3h1.167V527.7h1.167V527.6h1.167V540.0h1.167V528.7h1.167V528.4h1.167V525.5h1.167V527.4h1.167V525.0h1.167V526.5h1.167V528.6h1.167V530.8h1.167V532.4h1.167V535.0h1.167V542.8h1.167V538.1h1.167V538.2h1.167V537.6h1.167V535.0h1.167V533.9h1.167V532.2h1.167V535.0h1.167V541.4h1.167V539.5h1.167V539.3h1.167V538.7h1.167V541.1h1.167V538.5h1.167V540.8h1.167V541.5h1.167V531.6h1.167V535.7h1.167V536.3h1.167V537.1h1.167V537.9h1.167V532.9h1.167V524.2h1.167V540.6h1.167V543.3h1.167V527.4h1.167V530.6h1.167V531.3h1.167V543.6Z" fill="#ff2cf0"/><path d="M1080,543.2H1099.6" stroke="#ffe81a" stroke-width="1.6" fill="none"/><path d="M1153,543V537L1154.6,535L1156.2,537V543ZM1162,543V538L1163.6,536L1165.2,538V543Z" fill="#ff2cf0"/><path d="M1099,542.6H1210" stroke="#ff2cf0" stroke-width="2.2" fill="none"/><rect x="43" y="178" width="33.8" height="532.8" fill="rgb(205,40,20)" fill-opacity="0.32"/><rect x="1212" y="178" width="25" height="532.8" fill="rgb(205,40,20)" fill-opacity="0.32"/><defs><linearGradient id="gr" x1="0" y1="0" x2="0" y2="1"><stop offset="0" stop-color="#6fd050"/><stop offset="1" stop-color="#2f9a22"/></linearGradient><linearGradient id="rd" x1="0" y1="0" x2="0" y2="1"><stop offset="0" stop-color="#f26048"/><stop offset="1" stop-color="#dc3418"/></linearGradient></defs><rect x="43" y="175" width="33.8" height="3" fill="url(#rd)"/><rect x="76.8" y="175" width="1135.2" height="3" fill="url(#gr)"/><rect x="1212" y="175" width="25" height="3" fill="url(#rd)"/><rect x="1120" y="195" width="88" height="88.6" fill="#f2f08e" fill-opacity="0.62"/><rect x="1181.6" y="200" width="16.6" height="15.8" fill="#000"/><rect x="1181.6" y="221" width="16.6" height="15.8" fill="#00ffff"/><rect x="1181.6" y="242" width="16.6" height="15.8" fill="#ffe21a"/><rect x="1181.6" y="263" width="16.6" height="15.8" fill="#ff2cf8"/></svg>
<span id="t28" class="t lb" style="left:18.0px;top:295.3px;font-size:13px;color:#111;letter-spacing:-0.100px;">100</span>
<span id="t29" class="t lb" style="left:25.5px;top:414.3px;font-size:13px;color:#111;letter-spacing:-0.282px;">10</span>
<span id="t30" class="t lb" style="left:21.2px;top:651.3px;font-size:13px;color:#111;letter-spacing:-0.201px;">-10</span>
<span id="t31" class="t lb" style="left:43.8px;top:712.5px;font-size:13px;color:#111;letter-spacing:0.363px;">1</span>
<span id="t32" class="t lb" style="left:328.8px;top:712.5px;font-size:13px;color:#111;letter-spacing:0.567px;">256</span>
<span id="t33" class="t lb" style="left:1208.0px;top:712.5px;font-size:13px;color:#111;letter-spacing:-0.032px;">1024</span>
<div class="b" style="left:43px;top:178px;width:10px;height:14px;overflow:hidden"><span class="t lb" style="left:-1.1px;top:-4px;font-size:16.5px;color:#140404;-webkit-text-stroke:0.35px #140404">7</span></div>
<span id="t34" class="t lb" style="left:1140.6px;top:198.5px;font-size:13px;color:#111;letter-spacing:-0.001px;">Sr-90</span>
<span id="t35" class="t lb" style="left:1144.6px;top:219.5px;font-size:13px;color:#111;letter-spacing:0.085px;">K-40</span>
<span id="t36" class="t lb" style="left:1129.6px;top:240.5px;font-size:13px;color:#111;letter-spacing:0.148px;">Cs-137</span>
<span id="t37" class="t lb" style="left:1129.6px;top:261.5px;font-size:13px;color:#111;letter-spacing:0.390px;">Сумма</span>
<div class="b" style="left:1244px;top:178px;width:6px;height:568px;background:#afb1b3;border-radius:3px"></div>
<div class="b" style="left:1244px;top:725px;width:6px;height:21px;background:#3daee9;border-radius:3px"></div>
<span id="t38" class="t dj" style="left:9.4px;top:775.0px;font-size:13.7px;color:#111;letter-spacing:-0.367px;">Загрузка:</span>
<span id="t39" class="t dj" style="left:79.6px;top:775.0px;font-size:13.7px;color:#d98c00;letter-spacing:-0.448px;">32,4</span>
<span id="t40" class="t dj" style="left:149.2px;top:775.0px;font-size:13.7px;color:#111;letter-spacing:-0.370px;">Живое:</span>
<span id="t41" class="t dj" style="left:203.2px;top:775.0px;font-size:13.7px;color:#d98c00;letter-spacing:0.261px;">3000,000</span>
<span id="t42" class="t dj" style="left:289.4px;top:775.0px;font-size:13.7px;color:#111;letter-spacing:-0.204px;">Реальное:</span>
<span id="t43" class="t dj" style="left:363.4px;top:775.0px;font-size:13.7px;color:#d98c00;letter-spacing:0.198px;">3000,000</span>
<span id="t44" class="t dj" style="left:441.9px;top:775.0px;font-size:13.7px;color:#111;letter-spacing:-0.184px;">Мертвое:</span>
<span id="t45" class="t dj" style="left:510.4px;top:775.0px;font-size:13.7px;color:#d98c00;letter-spacing:-0.078px;">0,00%</span>
<span id="t46" class="t dj" style="left:581.6px;top:775.0px;font-size:13.7px;color:#111;letter-spacing:-0.434px;">Канал:</span>
<span id="t47" class="t dj" style="left:631.8px;top:775.0px;font-size:13.7px;color:#d98c00;letter-spacing:0.684px;">0</span>
<span id="t48" class="t dj" style="left:722.0px;top:775.0px;font-size:13.7px;color:#111;letter-spacing:-0.448px;">Отсчеты:</span>
<span id="t49" class="t dj" style="left:788.2px;top:775.0px;font-size:13.7px;color:#d98c00;letter-spacing:0.378px;">0</span>
<span id="t50" class="t dj" style="left:861.9px;top:775.0px;font-size:13.7px;color:#111;letter-spacing:-0.256px;">Энергия:</span>
<span id="t51" class="t dj" style="left:928.0px;top:775.0px;font-size:13.7px;color:#d98c00;letter-spacing:0.154px;">0,00</span>
<span id="t52" class="t dj" style="left:1001.7px;top:775.0px;font-size:13.7px;color:#111;letter-spacing:-0.566px;">ПШПВ:</span>
<span id="t53" class="t dj" style="left:1051.7px;top:775.0px;font-size:13.7px;color:#d98c00;letter-spacing:0.300px;">0,000</span>
<span id="t54" class="t dj" style="left:1141.8px;top:775.0px;font-size:13.7px;color:#111;letter-spacing:-0.100px;">Зона:</span>
<span id="t55" class="t dj" style="left:1187.4px;top:775.0px;font-size:13.7px;color:#d98c00;letter-spacing:-0.324px;">Стандарт</span>
<div class="b" style="left:501px;top:174px;width:579px;height:597px;background:#5883a8"></div>
<div class="b" style="left:506px;top:201px;width:569px;height:565px;background:#eff0f1"></div>
<span id="t56" class="t dj" style="left:507.2px;top:179.6px;font-size:12.8px;color:#fff;letter-spacing:-0.683px;">Результаты расчета активности для спектра K+Sr+Cs30-Model-3000s</span>
<div class="b" style="left:1007px;top:191px;width:6px;height:2px;background:#fff"></div>
<div class="b" style="left:1029.5px;top:184px;width:9px;height:9px;border:1px solid #fff;border-top-width:2px;box-sizing:border-box"></div>
<svg class="b" style="left:1058px;top:184px" width="10" height="10" viewBox="0 0 10 10"><path d="M1.4,1.4L8.6,8.4M8.6,1.4L1.4,8.4" stroke="#fff" stroke-width="1.5" fill="none"/></svg>
<span id="t57" class="t lb" style="left:513.8px;top:207.3px;font-size:14.6px;color:#111;letter-spacing:-0.224px;">Спектр:</span>
<span id="t58" class="t dj" style="left:584.8px;top:207.7px;font-size:13.7px;color:#1287db;letter-spacing:-0.271px;">K+Sr+Cs30-Model-3000s</span>
<div class="b" style="left:507px;top:237px;width:567px;height:1px;background:#c4c4c4"></div>
<div class="b" style="left:507px;top:261px;width:567px;height:1px;background:#c4c4c4"></div>
<div class="b" style="left:506px;top:237px;width:1px;height:276px;background:#bdbdbd"></div>
<div class="b" style="left:507px;top:512px;width:567px;height:1px;background:#c0c0c0"></div>
<div class="b" style="left:620px;top:238px;width:1px;height:23px;background:#c4c4c4"></div>
<div class="b" style="left:620px;top:263px;width:1px;height:73px;background:repeating-linear-gradient(#000 0 1px,transparent 1px 2px)"></div>
<div class="b" style="left:734px;top:238px;width:1px;height:23px;background:#c4c4c4"></div>
<div class="b" style="left:734px;top:263px;width:1px;height:73px;background:repeating-linear-gradient(#000 0 1px,transparent 1px 2px)"></div>
<div class="b" style="left:848px;top:238px;width:1px;height:23px;background:#c4c4c4"></div>
<div class="b" style="left:848px;top:263px;width:1px;height:73px;background:repeating-linear-gradient(#000 0 1px,transparent 1px 2px)"></div>
<div class="b" style="left:962px;top:238px;width:1px;height:23px;background:#c4c4c4"></div>
<div class="b" style="left:962px;top:263px;width:1px;height:73px;background:repeating-linear-gradient(#000 0 1px,transparent 1px 2px)"></div>
<span id="t59" class="t lb" style="left:513.8px;top:238.8px;font-size:14px;color:#222;letter-spacing:0.048px;">Нуклид/Энерг...</span>
<span id="t60" class="t lb" style="left:645.4px;top:238.8px;font-size:14px;color:#222;letter-spacing:0.150px;">Площадь</span>
<svg class="b" style="left:714px;top:246px" width="11" height="7" viewBox="0 0 11 7"><path d="M0.6,1h9l-4.5,4.8z" fill="#9a9a9a"/></svg>
<span id="t61" class="t lb" style="left:740.8px;top:238.8px;font-size:14px;color:#222;letter-spacing:0.187px;">Неопределен...</span>
<span id="t62" class="t lb" style="left:858.4px;top:238.8px;font-size:14px;color:#222;letter-spacing:-0.056px;">Активность,Бк</span>
<span id="t63" class="t lb" style="left:969.4px;top:238.8px;font-size:14px;color:#222;letter-spacing:0.077px;">Неопр. актив...</span>
<div class="b" style="left:527px;top:264px;width:18px;height:18px;border:1px solid #3daee9;border-radius:3px;box-sizing:border-box;background:#fcfcfc"></div>
<div class="b" style="left:530px;top:267px;width:12px;height:12px;background:#3daee9;border-radius:1px"></div>
<div class="b" style="left:517px;top:273px;width:9px;height:1px;background:repeating-linear-gradient(90deg,#000 0 1px,transparent 1px 2px)"></div>
<span id="t64" class="t lb" style="left:550.8px;top:263.7px;font-size:14.3px;color:#1287db;letter-spacing:-0.153px;font-weight:bold;">Sr-90</span>
<span id="t65" class="t lb" style="left:689.6px;top:263.8px;font-size:14px;color:#111;letter-spacing:0.251px;">46900</span>
<span id="t66" class="t lb" style="left:811.6px;top:263.8px;font-size:14px;color:#111;letter-spacing:0.361px;">1000</span>
<span id="t67" class="t lb" style="left:933.8px;top:263.7px;font-size:14.3px;color:#1287db;letter-spacing:0.047px;font-weight:bold;">178</span>
<span id="t68" class="t lb" style="left:1061.2px;top:263.8px;font-size:14px;color:#111;letter-spacing:1.009px;">9</span>
<div class="b" style="left:527px;top:289px;width:18px;height:18px;border:1px solid #3daee9;border-radius:3px;box-sizing:border-box;background:#fcfcfc"></div>
<div class="b" style="left:530px;top:292px;width:12px;height:12px;background:#3daee9;border-radius:1px"></div>
<div class="b" style="left:517px;top:298px;width:9px;height:1px;background:repeating-linear-gradient(90deg,#000 0 1px,transparent 1px 2px)"></div>
<span id="t69" class="t lb" style="left:550.8px;top:288.7px;font-size:14.3px;color:#1287db;font-weight:bold;">K-40</span>
<span id="t70" class="t lb" style="left:689.6px;top:288.8px;font-size:14px;color:#111;letter-spacing:0.251px;">21900</span>
<span id="t71" class="t lb" style="left:811.6px;top:288.8px;font-size:14px;color:#111;letter-spacing:0.361px;">1300</span>
<span id="t72" class="t lb" style="left:941.4px;top:288.7px;font-size:14.3px;color:#1287db;letter-spacing:0.249px;font-weight:bold;">62</span>
<span id="t73" class="t lb" style="left:1053.6px;top:288.8px;font-size:14px;color:#111;letter-spacing:0.413px;">12</span>
<div class="b" style="left:527px;top:314px;width:18px;height:18px;border:1px solid #3daee9;border-radius:3px;box-sizing:border-box;background:#fcfcfc"></div>
<div class="b" style="left:530px;top:317px;width:12px;height:12px;background:#3daee9;border-radius:1px"></div>
<div class="b" style="left:517px;top:323px;width:9px;height:1px;background:repeating-linear-gradient(90deg,#000 0 1px,transparent 1px 2px)"></div>
<span id="t74" class="t lb" style="left:550.8px;top:313.7px;font-size:14.3px;color:#1287db;letter-spacing:0.016px;font-weight:bold;">Cs-137</span>
<span id="t75" class="t lb" style="left:689.6px;top:313.8px;font-size:14px;color:#111;letter-spacing:0.251px;">21300</span>
<span id="t76" class="t lb" style="left:819.2px;top:313.8px;font-size:14px;color:#111;letter-spacing:0.547px;">700</span>
<span id="t77" class="t lb" style="left:933.8px;top:313.7px;font-size:14.3px;color:#1287db;letter-spacing:0.047px;font-weight:bold;">151</span>
<span id="t78" class="t lb" style="left:1053.6px;top:313.8px;font-size:14px;color:#111;letter-spacing:0.413px;">10</span>
<div class="b" style="left:516px;top:273px;width:1px;height:51px;background:repeating-linear-gradient(#000 0 1px,transparent 1px 2px)"></div>
<div class="b" style="left:514px;top:530px;width:553px;height:119.5px;border:1px solid #c9c9c9;border-radius:2px;box-sizing:border-box"></div>
<div class="b" style="left:517px;top:524px;width:74px;height:13px;background:#eff0f1"></div>
<span id="t79" class="t lb" style="left:517.8px;top:520.2px;font-size:14px;color:#1287db;letter-spacing:-0.092px;">Активность</span>
<span id="t80" class="t lb" style="left:522.8px;top:540.8px;font-size:14px;color:#111;letter-spacing:-0.400px;">На:</span>
<div class="b" style="left:523px;top:563px;width:152.6px;height:24.6px;background:#fff;border-radius:5px"></div>
<span id="t81" class="t dj" style="left:531.8px;top:565.9px;font-size:13.7px;color:#222;letter-spacing:0.035px;">Дата измерения</span>
<svg class="b" style="left:663.6px;top:571.6px" width="10" height="10" viewBox="0 0 10 10"><path d="M0.6,0.4h8.4l-4.2,8.8z" fill="#000"/></svg>
<div class="b" style="left:523px;top:615px;width:152.6px;height:24.6px;background:#fff;border-radius:5px"></div>
<span id="t82" class="t dj" style="left:583.0px;top:617.7px;font-size:13.7px;color:#222;letter-spacing:-0.432px;">Бк</span>
<svg class="b" style="left:663.6px;top:623.4px" width="10" height="10" viewBox="0 0 10 10"><path d="M0.6,0.4h8.4l-4.2,8.8z" fill="#000"/></svg>
<div class="b" style="left:712px;top:615px;width:152.6px;height:24.6px;background:#fff;border-radius:5px"></div>
<span id="t83" class="t dj" style="left:766.8px;top:617.7px;font-size:13.7px;color:#222;letter-spacing:0.104px;">Нет</span>
<svg class="b" style="left:852.6px;top:623.4px" width="10" height="10" viewBox="0 0 10 10"><path d="M0.6,0.4h8.4l-4.2,8.8z" fill="#000"/></svg>
<div class="b" style="left:902px;top:615px;width:152.6px;height:24.6px;background:#fff;border-radius:5px"></div>
<span id="t84" class="t dj" style="left:940.0px;top:617.7px;font-size:13.7px;color:#222;letter-spacing:0.120px;">Навеска</span>
<svg class="b" style="left:1042.6px;top:623.4px" width="10" height="10" viewBox="0 0 10 10"><path d="M0.6,0.4h8.4l-4.2,8.8z" fill="#000"/></svg>
<span id="t85" class="t lb" style="left:522.8px;top:593.2px;font-size:14px;color:#111;letter-spacing:0.105px;">Единицы измерения:</span>
<span id="t86" class="t lb" style="left:711.8px;top:593.2px;font-size:14px;color:#111;letter-spacing:0.183px;">Удельная:</span>
<span id="t87" class="t lb" style="left:901.8px;top:593.2px;font-size:14px;color:#111;letter-spacing:0.090px;">Образец:</span>
<div class="b" style="left:712.5px;top:563px;width:152px;height:24.5px;border:1px solid #c2c2c2;box-sizing:border-box;background:#f3f4f5"></div>
<div class="b" style="left:714.5px;top:565px;width:119px;height:20.5px;border:1px solid #bdbdbd;border-radius:2px;box-sizing:border-box;background:#fff"></div>
<span id="t88" class="t dj" style="left:718.8px;top:565.9px;font-size:13.7px;color:#111;letter-spacing:-0.778px;">15.10.2007</span>
<div class="b" style="left:844px;top:567px;width:13.6px;height:15.6px;border:1px solid #555;border-top:3px solid #444;box-sizing:border-box;background:#fff"><span class="t dj" style="left:1.2px;top:-3.4px;font-size:8px;color:#222;letter-spacing:-0.5px">15</span></div>
<div class="b" style="left:902.5px;top:563px;width:152px;height:24.5px;border:1px solid #c2c2c2;box-sizing:border-box;background:#f3f4f5"></div>
<div class="b" style="left:904.5px;top:565px;width:121px;height:20.5px;border:1px solid #bdbdbd;border-radius:2px;box-sizing:border-box;background:#fff"></div>
<span id="t89" class="t dj" style="left:908.8px;top:565.9px;font-size:13.7px;color:#111;letter-spacing:-0.811px;">19:57:03</span>
<div class="b" style="left:1032px;top:565px;width:21.6px;height:21.4px;background:#e2e3e4;border:1px solid #cfcfcf;border-radius:2px;box-sizing:border-box"></div>
<svg class="b" style="left:1034px;top:567px" width="18" height="18" viewBox="0 0 18 18"><circle cx="9.3" cy="9.1" r="7.3" fill="#fdfdfd" stroke="#6a6a6a" stroke-width="1"/><path d="M9.3,4.6V9.6H12.4" stroke="#333" stroke-width="1.2" fill="none"/><path d="M9.3,2.6v1M9.3,14.6v1M2.8,9.1h1M14.8,9.1h1" stroke="#777" stroke-width="0.8"/></svg>
<div class="b" style="left:514px;top:667px;width:553px;height:48px;border:1px solid #c9c9c9;border-radius:2px;box-sizing:border-box"></div>
<div class="b" style="left:517px;top:661px;width:40px;height:13px;background:#eff0f1"></div>
<span id="t90" class="t lb" style="left:517.8px;top:656.8px;font-size:14px;color:#1287db;letter-spacing:0.053px;">Отчет</span>
<span id="t91" class="t lb" style="left:518.4px;top:681.2px;font-size:14px;color:#111;letter-spacing:0.150px;">Шаблон:</span>
<div class="b" style="left:589.6px;top:679px;width:375px;height:24.6px;background:#fff;border-radius:5px"></div>
<span id="t92" class="t dj" style="left:704.2px;top:681.3px;font-size:13.7px;color:#222;letter-spacing:0.371px;">ActivityReportTest</span>
<svg class="b" style="left:952.6px;top:687px" width="10" height="10" viewBox="0 0 10 10"><path d="M0.6,0.4h8.4l-4.2,8.8z" fill="#000"/></svg>
<div class="b" style="left:970.6px;top:679px;width:84px;height:24.6px;background:#0a84d8;border-radius:5px"></div>
<span id="t93" class="t dj" style="left:980.0px;top:681.3px;font-size:13.7px;color:#0a1a2a;letter-spacing:-0.155px;">Показать</span>
</body></html>
